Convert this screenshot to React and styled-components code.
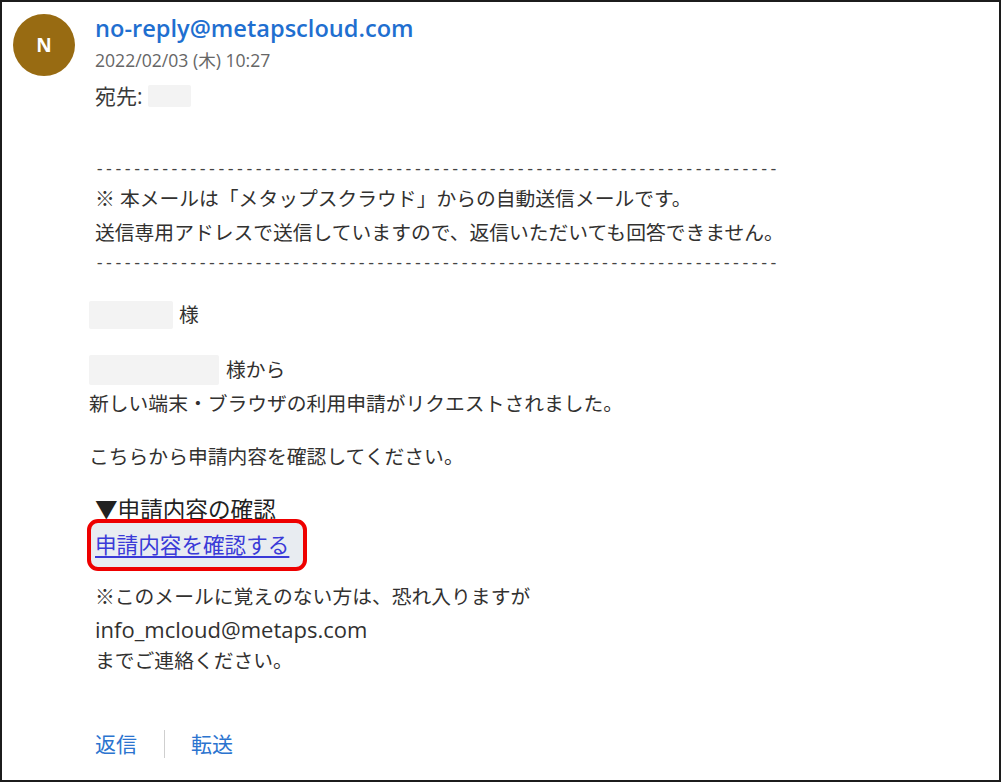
import React from "react"
import styled, { createGlobalStyle } from "styled-components"

const Global = createGlobalStyle`
    html, body {
        margin: 0;
        padding: 0;
        background: #ffffff;
    }
`;

const Frame = styled.div`
    box-sizing: border-box;
    width: 1001px;
    height: 782px;
    border: 2px solid #1c1c1c;
    background: #ffffff;
    font-family: "Open Sans", "Noto Sans CJK JP", sans-serif;
    color: #323130;
    overflow: hidden;
`;

const Header = styled.div`
    display: flex;
    gap: 20px;
    padding: 12px 0 0 11px;
`;

const Avatar = styled.div`
    width: 62px;
    height: 62px;
    border-radius: 50%;
    background: #986b12;
    color: #ffffff;
    display: flex;
    align-items: center;
    justify-content: center;
    font-family: "Open Sans", sans-serif;
    font-weight: 700;
    font-size: 19px;
    flex-shrink: 0;
`;

const Meta = styled.div`
    display: flex;
    flex-direction: column;
`;

const Sender = styled.div`
    font-size: 23.6px;
    font-weight: 600;
    line-height: 28px;
    color: #1f6fd0;
`;

const Date = styled.div`
    margin-top: 6px;
    font-size: 17.6px;
    line-height: 24px;
    color: #666666;
`;

const To = styled.div`
    margin-top: 10px;
    display: flex;
    align-items: center;
    gap: 5px;
    font-size: 21px;
    line-height: 28px;
    color: #3a3a3a;
`;

const Hidden = styled.span`
    display: inline-block;
    width: ${p => p.w}px;
    height: ${p => p.h}px;
    background: #f3f3f3;
    border-radius: 2px;
    margin-right: ${p => p.gap || 0}px;
    vertical-align: middle;
`;

const Body = styled.div`
    display: flex;
    flex-direction: column;
    align-items: flex-start;
    padding-left: 93px;
    font-size: 19.8px;
`;

const Dashes = styled.div`
    margin-top: ${p => p.top}px;
    font-family: "Liberation Mono", monospace;
    font-size: 15.6px;
    line-height: 24px;
    color: #444444;
    white-space: nowrap;
`;

const Line = styled.div`
    margin-top: ${p => p.top || 0}px;
    margin-left: ${p => p.shift || 0}px;
    line-height: ${p => p.lh || 34}px;
    white-space: nowrap;
    display: flex;
    align-items: center;
`;

const Heading = styled(Line)`
    font-size: 22.6px;
    color: #222222;
`;

const LinkBox = styled.div`
    margin-top: -8px;
    margin-left: -8px;
    border: 4px solid #ee0000;
    border-radius: 11px;
    background: #e8ecf1;
    padding: 6px 14px 6px 4px;
`;

const Link = styled.a`
    font-size: 21.6px;
    line-height: 32px;
    color: #3a3ad8;
    text-decoration: underline;
    text-underline-offset: 3px;
`;

const Latin = styled.span`
    font-size: 22px;
`;

const Footer = styled.div`
    margin-top: 52px;
    display: flex;
    align-items: center;
    font-size: 21px;
    line-height: 30px;
    color: #2b74cf;
`;

const Divider = styled.span`
    width: 1px;
    height: 28px;
    background: #cfcfcf;
    margin: 0 26px 0 27px;
`;

const dash = "-".repeat(73);

export default function App() {
    return (
        <Frame>
            <Global />
            <Header>
                <Avatar>N</Avatar>
                <Meta>
                    <Sender>no-reply@metapscloud.com</Sender>
                    <Date>2022/02/03 (木) 10:27</Date>
                    <To>宛先: <Hidden w={43} h={22} /></To>
                </Meta>
            </Header>
            <Body>
                <Dashes top={48}>{dash}</Dashes>
                <Line>※ 本メールは「メタップスクラウド」からの自動送信メールです。</Line>
                <Line>送信専用アドレスで送信していますので、返信いただいても回答できません。</Line>
                <Dashes top={2}>{dash}</Dashes>
                <Line top={22} shift={-6}><Hidden w={84} h={28} gap={6} />様</Line>
                <Line top={21} shift={-6}><Hidden w={130} h={30} gap={7} />様から</Line>
                <Line shift={-6}>新しい端末・ブラウザの利用申請がリクエストされました。</Line>
                <Line top={19} shift={-6}>こちらから申請内容を確認してください。</Line>
                <Heading top={19}>▼申請内容の確認</Heading>
                <LinkBox><Link href="#">申請内容を確認する</Link></LinkBox>
                <Line top={10} lh={32}>※このメールに覚えのない方は、恐れ入りますが</Line>
                <Line lh={32}><Latin>info_mcloud@metaps.com</Latin></Line>
                <Line lh={32}>までご連絡ください。</Line>
                <Footer>
                    返信
                    <Divider />
                    転送
                </Footer>
            </Body>
        </Frame>
    )
}
